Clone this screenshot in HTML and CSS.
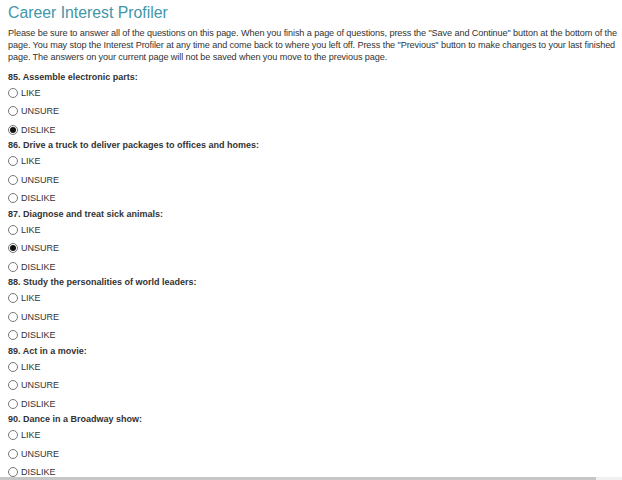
FILE: index.html
```html
<!DOCTYPE html>
<html>
<head>
<meta charset="utf-8">
<link rel="stylesheet" href="styles.css">
</head>
<body>
<div class="page">
  <h1 class="title">Career Interest Profiler</h1>
  <p class="intro">Please be sure to answer all of the questions on this page. When you finish a page of questions, press the "Save and Continue" button at the bottom of the page. You may stop the Interest Profiler at any time and come back to where you left off. Press the "Previous" button to make changes to your last finished page. The answers on your current page will not be saved when you move to the previous page.</p>

  <div class="question">
    <div class="q-label">85. Assemble electronic parts:</div>
    <div class="option"><span class="radio"></span>LIKE</div>
    <div class="option"><span class="radio"></span>UNSURE</div>
    <div class="option"><span class="radio checked"></span>DISLIKE</div>
  </div>
  <div class="question">
    <div class="q-label">86. Drive a truck to deliver packages to offices and homes:</div>
    <div class="option"><span class="radio"></span>LIKE</div>
    <div class="option"><span class="radio"></span>UNSURE</div>
    <div class="option"><span class="radio"></span>DISLIKE</div>
  </div>
  <div class="question">
    <div class="q-label">87. Diagnose and treat sick animals:</div>
    <div class="option"><span class="radio"></span>LIKE</div>
    <div class="option"><span class="radio checked"></span>UNSURE</div>
    <div class="option"><span class="radio"></span>DISLIKE</div>
  </div>
  <div class="question">
    <div class="q-label">88. Study the personalities of world leaders:</div>
    <div class="option"><span class="radio"></span>LIKE</div>
    <div class="option"><span class="radio"></span>UNSURE</div>
    <div class="option"><span class="radio"></span>DISLIKE</div>
  </div>
  <div class="question">
    <div class="q-label">89. Act in a movie:</div>
    <div class="option"><span class="radio"></span>LIKE</div>
    <div class="option"><span class="radio"></span>UNSURE</div>
    <div class="option"><span class="radio"></span>DISLIKE</div>
  </div>
  <div class="question">
    <div class="q-label">90. Dance in a Broadway show:</div>
    <div class="option"><span class="radio"></span>LIKE</div>
    <div class="option"><span class="radio"></span>UNSURE</div>
    <div class="option"><span class="radio"></span>DISLIKE</div>
  </div>
</div>
<div class="hscroll"><div class="hscroll-thumb"></div><div class="hscroll-arrow"></div></div>
</body>
</html>
```

FILE: styles.css
```css
html, body {
  margin: 0;
  padding: 0;
  background: #ffffff;
  overflow: hidden;
}
body {
  font-family: "Liberation Sans", Arial, sans-serif;
  color: #333333;
}
.page {
  padding: 2px 1px 0 8px;
}
.title {
  margin: 0;
  font-size: 15.8px;
  line-height: 22px;
  font-weight: normal;
  color: #4297a8;
}
.intro {
  margin: 3px 0 0 0;
  font-size: 9.15px;
  line-height: 12px;
  letter-spacing: -0.1px;
}
.intro + .question {
  margin-top: 7.5px;
}
.question {
  font-size: 9px;
}
.q-label {
  font-weight: bold;
  line-height: 13px;
  height: 13px;
}
.option {
  display: flex;
  align-items: center;
  height: 18.5px;
  line-height: 18.5px;
}
.radio {
  width: 10px;
  height: 10px;
  box-sizing: border-box;
  border: 1px solid #777777;
  border-radius: 50%;
  margin-right: 3px;
  display: flex;
  align-items: center;
  justify-content: center;
  background: #fff;
}
.radio.checked::after {
  content: "";
  width: 6px;
  height: 6px;
  border-radius: 50%;
  background: #111;
}
.hscroll {
  position: fixed;
  left: 0;
  right: 0;
  bottom: 0;
  height: 3px;
  background: #f0f0f0;
  display: flex;
}
.hscroll-thumb {
  width: 596px;
  background: #c6c6c6;
}
.hscroll-arrow {
  flex: 1;
}
```
